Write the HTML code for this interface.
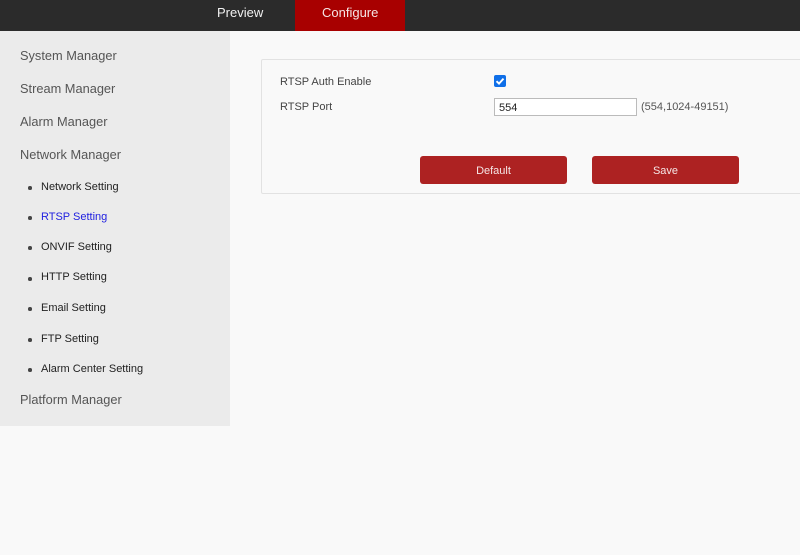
<!DOCTYPE html>
<html><head><meta charset="utf-8"><style>
html,body{margin:0;padding:0;width:800px;height:555px;overflow:hidden;background:#f9f9f9;font-family:"Liberation Sans",Arial,sans-serif}
.a{position:absolute;white-space:nowrap}
.h{font-size:12.8px;color:#555;line-height:16px;left:20px}
.s{font-size:11px;color:#222;line-height:14px;left:41px}
.d{position:absolute;left:28px;width:3.5px;height:3.5px;border-radius:50%;background:#444}
.l{font-size:11px;color:#444;line-height:14px}
.b{position:absolute;top:156px;width:147px;height:28px;background:#ad2222;border-radius:3px;color:#f5e6e6;font-size:11px;font-weight:400;text-align:center;line-height:30px}
</style></head><body>
<div class="a" style="left:0;top:0;width:800px;height:31px;background:#2b2b2b"></div>
<div class="a" style="left:295px;top:0;width:110px;height:31px;background:#a80000"></div>
<div class="a" style="left:217px;top:5px;font-size:13px;line-height:16px;color:#f2f2f2">Preview</div>
<div class="a" style="left:322px;top:5px;font-size:13px;line-height:16px;color:#f5e5e5">Configure</div>
<div class="a" style="left:0;top:31px;width:230px;height:395px;background:#ebebeb"></div>
<div class="a h" style="top:48px">System Manager</div>
<div class="a h" style="top:81px">Stream Manager</div>
<div class="a h" style="top:114px">Alarm Manager</div>
<div class="a h" style="top:147px">Network Manager</div>
<div class="a h" style="top:392px">Platform Manager</div>
<div class="d" style="top:186px"></div><div class="a s" style="top:180px">Network Setting</div>
<div class="d" style="top:216px"></div><div class="a s" style="top:210px;color:#2020e0">RTSP Setting</div>
<div class="d" style="top:246px"></div><div class="a s" style="top:240px">ONVIF Setting</div>
<div class="d" style="top:277px"></div><div class="a s" style="top:270px">HTTP Setting</div>
<div class="d" style="top:307px"></div><div class="a s" style="top:301px">Email Setting</div>
<div class="d" style="top:338px"></div><div class="a s" style="top:332px">FTP Setting</div>
<div class="d" style="top:368px"></div><div class="a s" style="top:362px">Alarm Center Setting</div>
<div class="a" style="left:261px;top:59px;width:545px;height:133px;border:1px solid #e2e2e2;border-radius:2px;background:#f9f9f9"></div>
<div class="a l" style="left:280px;top:75px">RTSP Auth Enable</div>
<div class="a l" style="left:280px;top:100px">RTSP Port</div>
<div class="a" style="left:494px;top:75px;width:12px;height:12px;border-radius:2px;background:#0f6fe8"><svg width="12" height="12" viewBox="0 0 12 12" style="display:block"><path d="M2.5 6.2 L5 8.6 L9.5 3.6" fill="none" stroke="#fff" stroke-width="1.9"/></svg></div>
<div class="a" style="left:494px;top:98px;width:137px;height:16px;border:1px solid #bbb;background:#fff;padding-left:4px;font-size:11px;line-height:18px;color:#222">554</div>
<div class="a l" style="left:641px;top:100px;color:#555">(554,1024-49151)</div>
<div class="b" style="left:420px">Default</div>
<div class="b" style="left:592px">Save</div>
</body></html>
